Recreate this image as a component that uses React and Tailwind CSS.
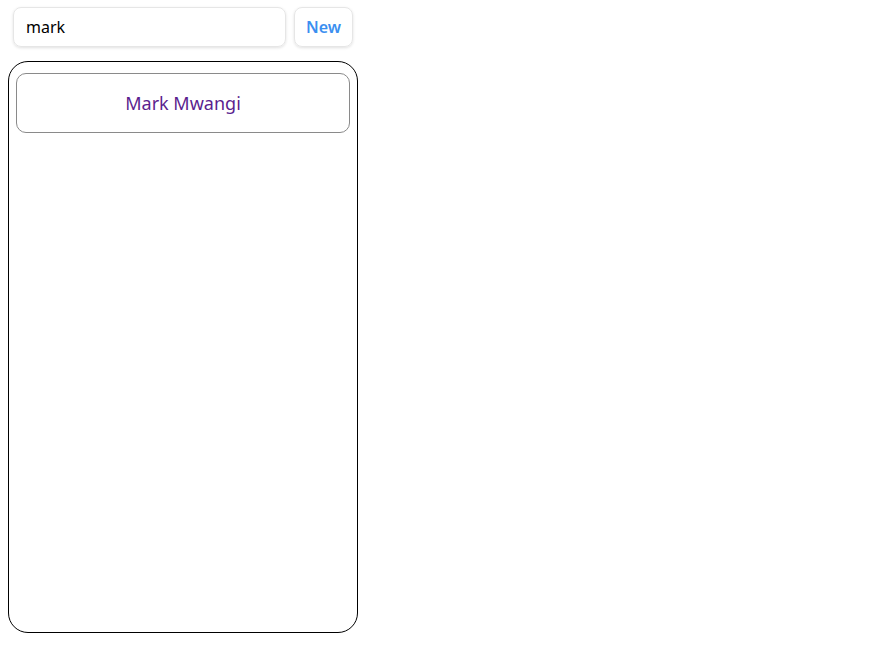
import React, { useState } from "react";

export default function App() {
  const [query, setQuery] = useState("mark");
  const people = ["Mark Mwangi"];

  return (
    <div className="w-[892px] h-[652px] bg-white font-['Noto_Sans',sans-serif]">
      <div className="w-[350px] ml-2 pt-[7px]">
        {/* Search row */}
        <div className="flex gap-2 pl-[5px] pr-[5px]">
          <input
            value={query}
            onChange={(e) => setQuery(e.target.value)}
            className="flex-1 min-w-0 h-[40px] px-3 rounded-lg border border-[#e6e6e6] shadow-[0_1px_3px_rgba(0,0,0,0.12)] text-[16px] text-black outline-none"
          />
          <button
            type="button"
            className="w-[59px] h-[40px] rounded-lg border border-[#e6e6e6] shadow-[0_1px_3px_rgba(0,0,0,0.12)] text-[16px] font-semibold text-[#3b8ff0]"
          >
            New
          </button>
        </div>

        {/* Results */}
        <div className="mt-[14px] h-[572px] rounded-[20px] border border-black p-[7px] pt-[11px]">
          {people.map((p) => (
            <div
              key={p}
              className="h-[60px] flex items-center justify-center rounded-[10px] border border-[#8a8a8a] text-[18px] text-[#5b1f8f]"
            >
              {p}
            </div>
          ))}
        </div>
      </div>
    </div>
  );
}
